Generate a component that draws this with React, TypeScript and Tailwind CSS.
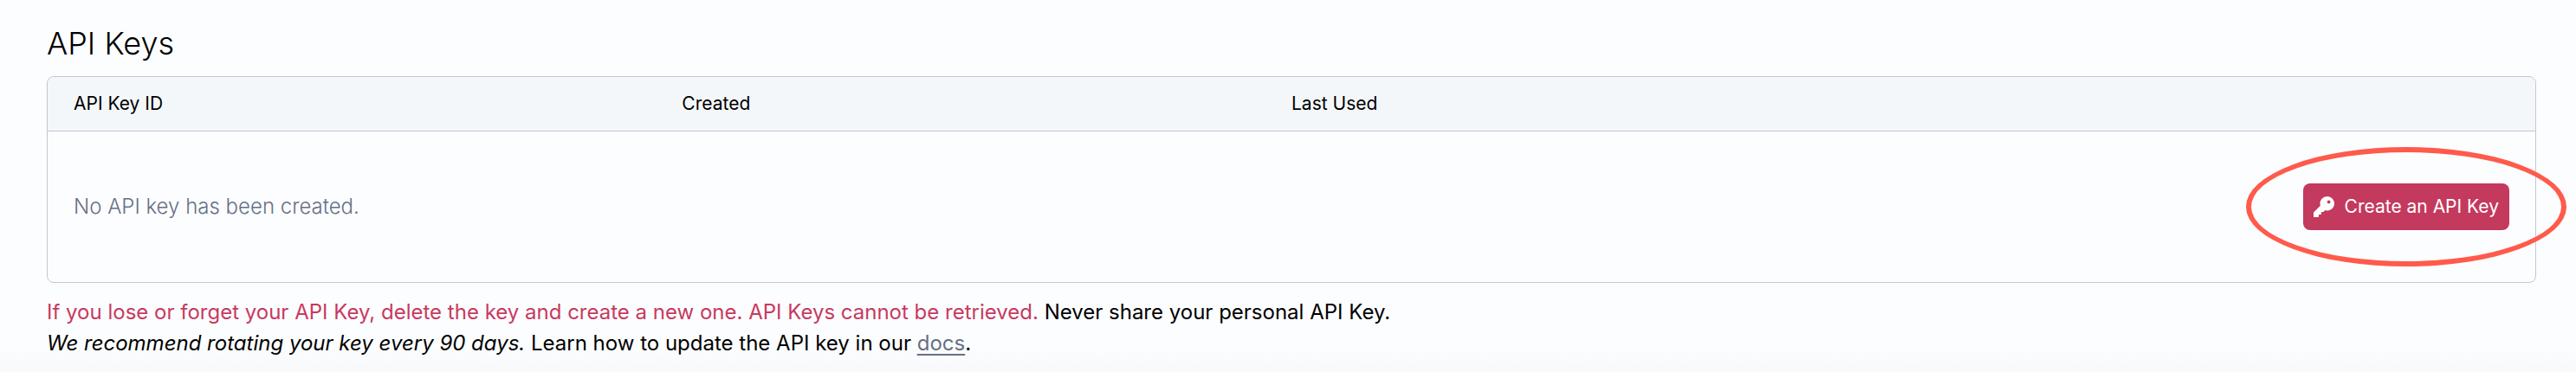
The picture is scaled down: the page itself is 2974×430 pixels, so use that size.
/**
 * ApiKeysPanel — list of API keys for the account, with an empty state
 * and the usage notes underneath.
 */
import { FaKey } from 'react-icons/fa6'

const COLUMNS = [
  { label: 'API Key ID', width: 'w-[25.5%]' },
  { label: 'Created', width: 'w-[24.5%]' },
  { label: 'Last Used', width: 'w-[24.5%]' },
]

function CreateKeyButton() {
  return (
    <div className="relative inline-flex">
      <button
        type="button"
        className="flex items-center gap-3 rounded-lg bg-[#c4395e] px-3 py-3 text-[21px] leading-[30px] font-normal whitespace-nowrap text-white"
      >
        <FaKey className="size-6 shrink-0" aria-hidden="true" />
        <span>Create an API Key</span>
      </button>
      {/* Highlight ring */}
      <div className="pointer-events-none absolute -inset-x-[66px] -inset-y-[42px] rounded-[50%] border-[6px] border-[#ff5a4b]" />
    </div>
  )
}

export default function App() {
  return (
    <main className="min-h-screen bg-[#fcfdff] bg-linear-to-t from-[#f8f9fb] to-[#fcfdff] to-[30px] pt-7 pr-[46px] pl-[54px] font-['Inter',sans-serif] text-black">
      <h1 className="text-4xl leading-[44px] font-light">API Keys</h1>

      {/* Key table */}
      <div className="mt-4 rounded-lg border border-[#c0c8d3]">
        <table className="w-full table-fixed text-left">
          <thead>
            <tr className="bg-[#f4f7fa]">
              {COLUMNS.map((col) => (
                <th
                  key={col.label}
                  scope="col"
                  className={`${col.width} border-b border-[#c0c8d3] py-4 text-[21px] leading-[30px] font-normal first:rounded-tl-lg first:pl-[30px]`}
                >
                  {col.label}
                </th>
              ))}
              <td className="rounded-tr-lg border-b border-[#c0c8d3]" />
            </tr>
          </thead>
          <tbody>
            <tr>
              <td colSpan={3} className="py-[60px] pl-[30px] text-2xl font-light text-[#667085]">
                No API key has been created.
              </td>
              <td className="py-[60px] pr-[30px]">
                <div className="flex justify-end">
                  <CreateKeyButton />
                </div>
              </td>
            </tr>
          </tbody>
        </table>
      </div>

      {/* Notes */}
      <div className="mt-4 text-2xl leading-9">
        <p>
          <span className="text-[#c8395f]">
            If you lose or forget your API Key, delete the key and create a new one. API Keys cannot be retrieved.
          </span>{' '}
          Never share your personal API Key.
        </p>
        <p>
          <em>We recommend rotating your key every 90 days.</em> Learn how to update the API key in our{' '}
          <a href="#docs" className="text-[#667085] underline decoration-2 underline-offset-4">
            docs
          </a>
          .
        </p>
      </div>
    </main>
  )
}
